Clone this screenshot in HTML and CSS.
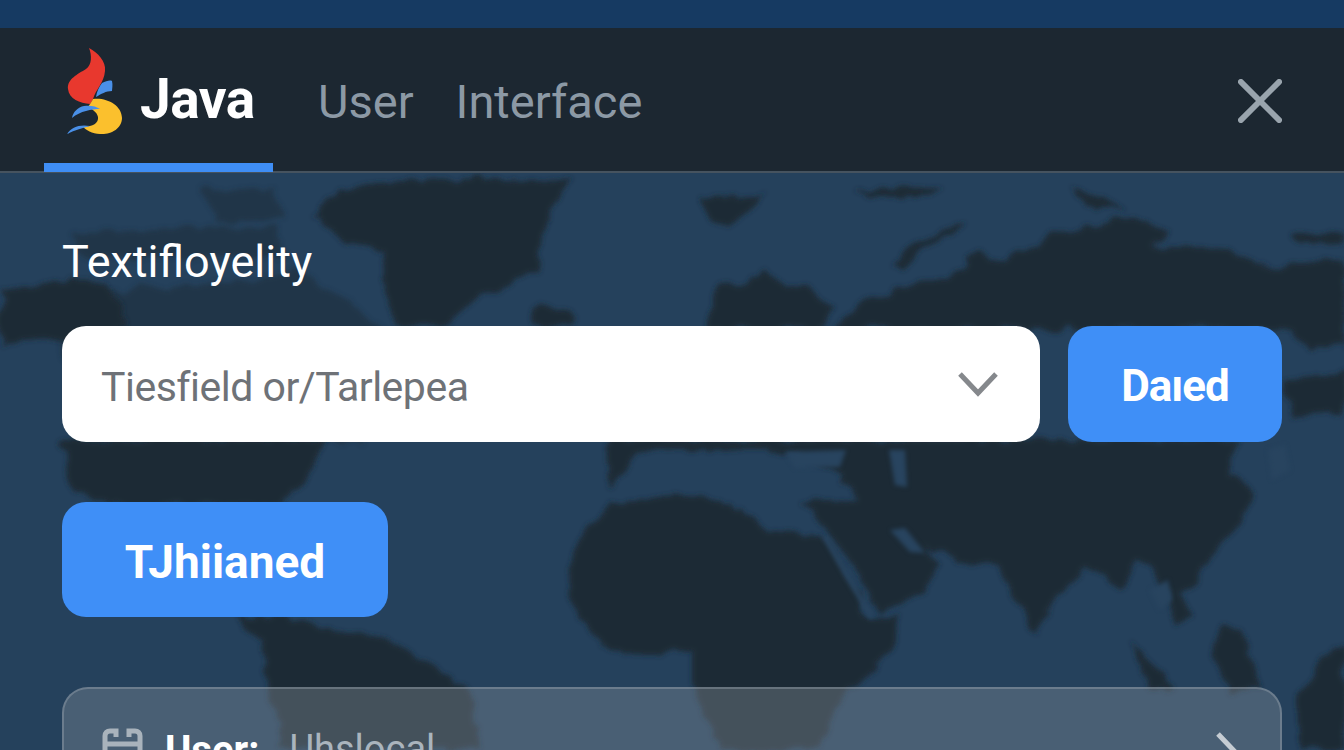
FILE: index.html
```html
<!DOCTYPE html>
<html lang="en">
<head>
<meta charset="utf-8">
<title>Java User Interface</title>
<link rel="stylesheet" href="styles.css">
</head>
<body>
<div class="app">
  <svg class="map" viewBox="0 0 1344 750" aria-hidden="true">
    <defs>
      <filter id="rough" x="-5%" y="-5%" width="110%" height="110%">
        <feTurbulence type="fractalNoise" baseFrequency="0.045" numOctaves="3" seed="7"/>
        <feDisplacementMap in="SourceGraphic" scale="16" xChannelSelector="R" yChannelSelector="G"/>
        <feGaussianBlur stdDeviation="2.6"/>
      </filter>
    </defs>
    <g class="faint">
      <path d="M200 190 L275 186 L280 220 L215 222Z"/>
      <path d="M73 235 L180 226 L275 228 L290 255 L140 258 L80 254Z"/>
      <path d="M107 290 L220 283 L300 270 L345 300 L380 326 L360 442 L90 442 L60 340Z"/>
    </g>
    <g class="land">
      <path d="M343 187 L450 178 L574 181 L549 212 L538 270 L471 303 L440 326 L394 326 L381 253 L326 233 L313 217Z"/>
      <path d="M531 307 L574 310 L570 326 L535 326Z"/>
      <path d="M0 290 L60 282 L107 285 L130 326 L60 340 L0 345Z"/>
      <path d="M60 440 L330 440 L317 462 L283 505 L230 505 L110 505 L73 490Z"/>
      <path d="M233 618 L290 618 L333 627 L400 645 L470 690 L480 750 L280 750 L267 680 L262 642Z"/>
      <path d="M698 198 L766 197 L745 212 L730 228 L712 222Z"/>
      <path d="M856 192 L885 188 L946 187 L930 197 L870 197Z"/>
      <path d="M1070 190 L1100 196 L1126 210 L1095 210Z"/>
      <path d="M968 222 L930 235 L905 248 L891 267 L902 272 L920 250 L950 236Z"/>
      <path d="M706 330 L716 290 L766 273 L810 290 L835 312 L820 330Z"/>
      <path d="M963 290 L968 258 L982 252 L989 285Z"/>
      <path d="M835 330 L860 300 L929 282 L1023 250 L1058 233 L1126 217 L1169 230 L1152 247 L1229 250 L1259 267 L1344 258 L1344 330Z"/>
      <path d="M1293 230 L1344 235 L1344 245 L1300 242Z"/>
      <path d="M1290 326 L1344 300 L1344 345 L1310 350Z"/>
      <path d="M1282 380 L1344 372 L1344 412 L1295 420Z"/>
      <path d="M610 440 L1240 440 L1232 473 L1255 490 L1241 523 L1210 555 L1196 582 L1180 592 L1195 615 L1175 627 L1169 590 L1140 560 L1120 590 L1090 567 L1060 590 L1035 633 L998 567 L925 550 L889 530 L860 500 L830 470 L780 450 L640 450 L612 490Z"/>
      <path d="M664 497 L720 500 L770 530 L822 537 L870 617 L900 617 L895 647 L846 690 L820 750 L720 750 L694 687 L694 652 L640 652 L603 647 L569 600 L572 550 L610 505Z"/>
      <path d="M800 500 L870 500 L905 535 L940 563 L925 590 L880 612 L830 530Z"/>
      <path d="M1210 650 L1222 625 L1245 640 L1258 690 L1230 690Z"/>
      <path d="M1130 640 L1150 660 L1172 690 L1150 690Z"/>
      <path d="M1300 690 L1330 650 L1344 645 L1344 750 L1300 750Z"/>
    </g>
    <g class="sea">
      <path d="M822 537 L827 535 L874 616 L870 620Z"/>
      <path d="M785 452 L846 450 L840 467 L795 468Z"/>
      <path d="M889 450 L905 450 L907 487 L895 485Z"/>
      <path d="M890 530 L905 528 L925 553 L910 552Z"/>
      <path d="M1268 450 L1285 445 L1290 470 L1272 480Z"/>
      <path d="M1150 590 L1168 580 L1172 600 L1160 610Z"/>
    </g>
  </svg>

  <div class="top-band"></div>

  <header class="header">
    <div class="tab">
      <svg class="logo" viewBox="0 0 60 90" aria-hidden="true">
        <path class="flame-blue" d="M36 36C40 34 44 33 46 34C47 38 46 42 46 44C40 44 35 47 30 50C31 44 33 40 36 36Z"/>
        <path class="flame-red" d="M23 1C32 6 40 14 39 24C38 36 30 42 27 52C26 54 25 56 24 57C14 56 3 52 2 42C1 32 12 27 20 22C26 18 26 8 23 1Z"/>
        <path class="flame-yellow" d="M27 52C40 50 56 58 56 71C56 82 44 88 34 87C26 87 20 83 16 79C24 81 33 77 32 70C31 65 26 62 22 60C24 57 26 54 27 52Z"/>
        <path class="flame-blue" d="M6 71C7 65 12 60 18 59C24 58 30 59 34 62C26 62 14 64 6 71Z"/>
        <path class="flame-blue" d="M1 87C5 80 14 77 24 79C17 81 9 83 1 87Z"/>
      </svg>
      <span class="brand">Java</span>
    </div>
    <nav class="nav">
      <span>User</span>
      <span>Interface</span>
    </nav>
    <svg class="close" viewBox="0 0 46 46" aria-hidden="true">
      <path d="M3 3L43 43M43 3L3 43"/>
    </svg>
  </header>

  <main class="content">
    <h1 class="label">Textifloyelity</h1>
    <div class="row">
      <div class="select">
        <span class="select-text">Tiesfield or/Tarlepea</span>
        <svg class="chevron" viewBox="0 0 42 26" aria-hidden="true"><path d="M3 3L21 22L39 3"/></svg>
      </div>
      <button class="btn btn-side">Daıed</button>
    </div>
    <button class="btn btn-main">TJhiianed</button>
    <section class="card">
      <svg class="card-icon" viewBox="0 0 41 44" aria-hidden="true">
        <path d="M14 10V4H8C5 4 3 6 3 9V44M27 10V4H33C36 4 38 6 38 9V44M3 17H38"/>
      </svg>
      <span class="card-key">User:</span>
      <span class="card-val">Uhslocal</span>
      <svg class="card-arrow" viewBox="0 0 30 50" aria-hidden="true"><path d="M4 3L25 25L4 47"/></svg>
    </section>
  </main>
</div>
</body>
</html>
```

FILE: styles.css
```css
* { box-sizing: border-box; }

html, body {
  margin: 0;
  height: 100%;
  overflow: hidden;
}

.app {
  position: relative;
  width: 1344px;
  height: 750px;
  overflow: hidden;
  background: #25415c;
  font-family: Roboto, "Liberation Sans", sans-serif;
}

.map {
  position: absolute;
  inset: 0;
  width: 100%;
  height: 100%;
}

.land {
  fill: #1e2a36;
  filter: url(#rough);
}

.faint {
  fill: #1e2a36;
  opacity: 0.5;
  filter: url(#rough);
}

.sea {
  fill: #28445f;
  filter: blur(2px);
}

.top-band {
  position: relative;
  height: 28px;
  background: #163a62;
}

.header {
  position: relative;
  display: flex;
  align-items: center;
  height: 145px;
  padding: 0 62px 0 44px;
  background: #1c2731;
  border-bottom: 2px solid #46535f;
}

.tab {
  display: flex;
  align-items: center;
  align-self: stretch;
  width: 229px;
  padding: 0 0 0 22px;
  gap: 14px;
  border-bottom: 9px solid #3f8ef5;
  margin-bottom: -1px;
}

.logo {
  width: 60px;
  height: 90px;
  margin-bottom: 8px;
  flex: none;
}

.flame-red { fill: #e8382e; }
.flame-blue { fill: #4a90e8; }
.flame-yellow { fill: #fbc02d; }

.brand {
  color: #fff;
  font-size: 55px;
  font-weight: 700;
  letter-spacing: -0.5px;
  margin-top: 6px;
}

.nav {
  display: flex;
  gap: 42px;
  margin-left: 45px;
  color: #8c99a5;
  font-size: 47px;
  margin-top: 4px;
}

.close {
  width: 44px;
  height: 44px;
  margin-left: auto;
  margin-top: 2px;
  fill: none;
  stroke: #99a4ad;
  stroke-width: 6;
  stroke-linecap: round;
}

.content {
  position: relative;
  padding: 58px 62px 0;
}

.label {
  margin: 0;
  height: 62px;
  color: #fff;
  font-size: 45px;
  font-weight: 400;
  line-height: 62px;
}

.row {
  display: flex;
  gap: 28px;
  margin-top: 33px;
}

.select {
  display: flex;
  align-items: center;
  justify-content: space-between;
  flex: 1;
  height: 116px;
  padding: 0 41px 0 39px;
  background: #fff;
  border-radius: 24px;
  color: #6e7277;
  font-size: 41px;
  letter-spacing: -0.5px;
}

.select-text {
  padding-top: 5px;
}

.chevron {
  width: 42px;
  height: 26px;
  fill: none;
  stroke: #85888c;
  stroke-width: 5;
}

.btn {
  border: 0;
  padding: 4px 0 0;
  color: #fff;
  font-family: inherit;
  font-weight: 700;
  background: #3f8ff7;
  border-radius: 24px;
}

.btn-side {
  width: 214px;
  height: 116px;
  font-size: 44px;
  letter-spacing: -1px;
}

.btn-main {
  display: block;
  width: 326px;
  height: 115px;
  margin-top: 60px;
  font-size: 46px;
}

.card {
  display: flex;
  align-items: flex-start;
  height: 120px;
  margin-top: 70px;
  padding: 38px 40px 0;
  background: rgba(135, 145, 155, 0.38);
  border: 2px solid rgba(170, 180, 190, 0.35);
  border-radius: 26px;
}

.card-icon {
  width: 41px;
  height: 44px;
  margin-left: -2px;
  fill: none;
  stroke: #a9b3bc;
  stroke-width: 5;
}

.card-key {
  margin-left: 22px;
  color: #fff;
  font-size: 40px;
  font-weight: 700;
}

.card-val {
  margin-left: 30px;
  color: #aab4bd;
  font-size: 38px;
}

.card-arrow {
  width: 30px;
  height: 50px;
  margin-left: auto;
  margin-top: 4px;
  margin-right: -4px;
  fill: none;
  stroke: #c5ccd3;
  stroke-width: 5;
}
```
